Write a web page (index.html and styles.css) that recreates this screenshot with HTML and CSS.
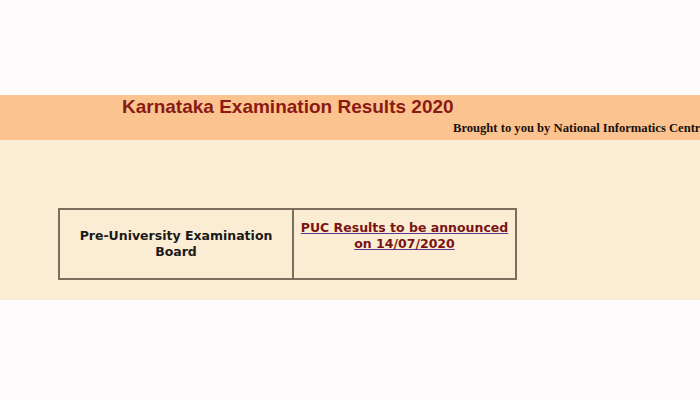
FILE: index.html
```html
<!DOCTYPE html>
<html>
<head>
<meta charset="utf-8">
<link rel="stylesheet" href="styles.css">
</head>
<body>
<div class="top"></div>
<div class="band">
  <h1 class="title">Karnataka Examination Results 2020</h1>
  <div class="credit">Brought to you by National Informatics Centre</div>
</div>
<div class="main">
  <table class="results">
    <tr>
      <td class="board">Pre-University Examination Board</td>
      <td class="link-cell"><a href="#" class="result-link">PUC Results to be announced on 14/07/2020</a></td>
    </tr>
  </table>
</div>
</body>
</html>
```
FILE: styles.css
```css
html, body {
  margin: 0;
  padding: 0;
  background: #fdfbfc;
  overflow: hidden;
}
.top {
  height: 95px;
}
.band {
  height: 45px;
  background: #fbc38f;
  overflow: hidden;
  white-space: nowrap;
}
.title {
  margin: 0;
  padding: 1px 0 0 122px;
  font-family: "Liberation Sans", Arial, sans-serif;
  font-weight: bold;
  font-size: 19px;
  line-height: 22px;
  color: #8a1a14;
}
.credit {
  padding-left: 453px;
  margin-top: 3px;
  font-family: "Liberation Serif", "Times New Roman", serif;
  font-weight: bold;
  font-size: 12.6px;
  line-height: 15px;
  color: #1a120c;
}
.main {
  background: #fbedd3;
  height: 160px;
  padding-top: 68px;
  box-sizing: border-box;
}
.results {
  margin-left: 58px;
  width: 459px;
  height: 72px;
  border-collapse: collapse;
  border: 2px solid #7b6f60;
}
.results td {
  border: 2px solid #7b6f60;
  text-align: center;
  font-family: "DejaVu Sans", Verdana, sans-serif;
  font-weight: bold;
  font-size: 12.5px;
  line-height: 16px;
  padding: 0 2px;
}
.board {
  width: 228px;
  color: #1c1a18;
}
.link-cell {
  vertical-align: top;
  padding-top: 10px !important;
}
.result-link {
  color: #7a1414;
  text-decoration: underline;
  text-decoration-color: #5a3a8c;
}
```
